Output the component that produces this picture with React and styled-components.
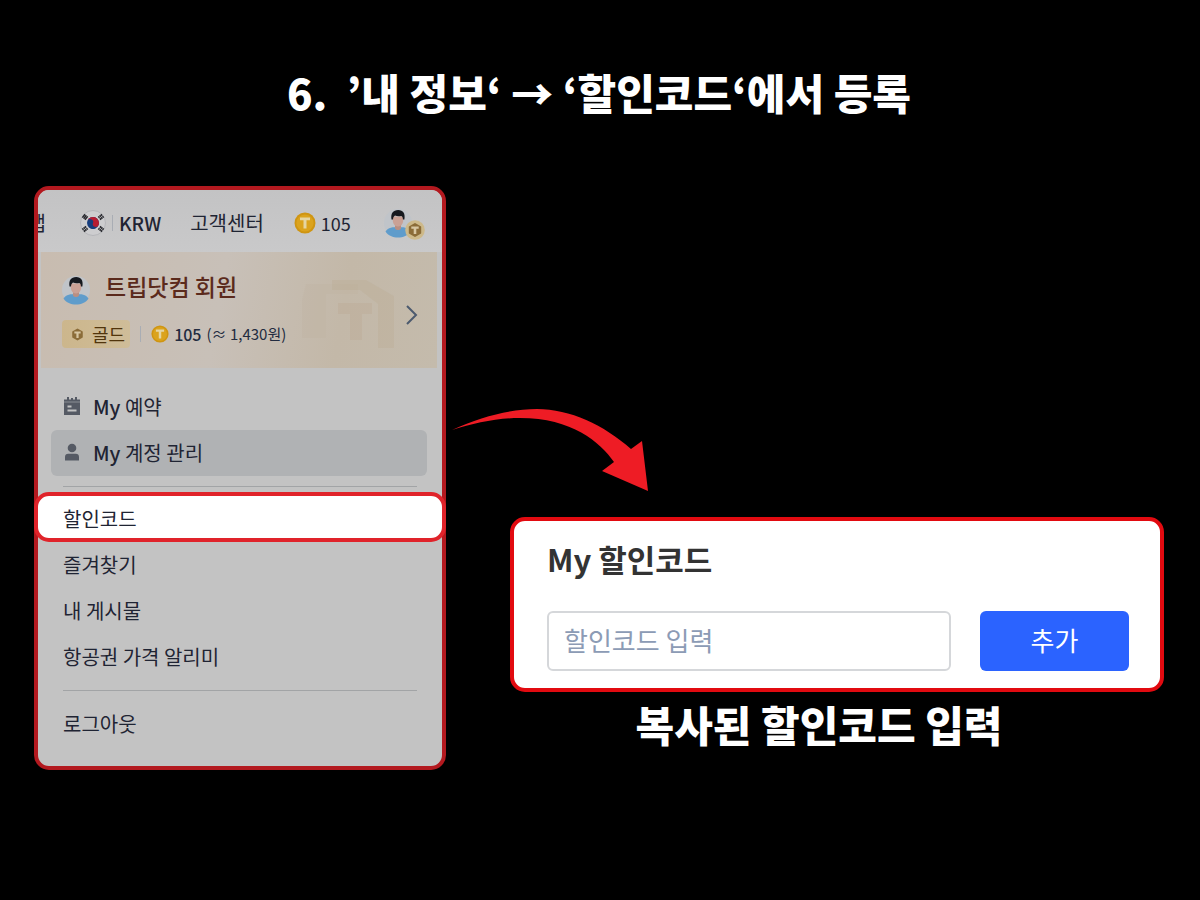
import React from "react";
import styled, { createGlobalStyle } from "styled-components";

const GlobalStyle = createGlobalStyle`
  *, *::before, *::after { box-sizing: border-box; }
  body {
    margin: 0;
    background: #000;
    color: #1f2433;
    font-family: "Noto Sans CJK KR", "Noto Sans", sans-serif;
  }
`;

const Page = styled.main`
  min-height: 100vh;
  padding: 68px 36px 40px 34px;
`;

const Title = styled.h1`
  margin: 0 0 70px;
  color: #fff;
  font-size: 42px;
  font-weight: 900;
  line-height: 48px;
  text-align: center;
  white-space: pre-wrap;
`;

const Steps = styled.div`
  display: flex;
  align-items: flex-start;
`;

const Panel = styled.section`
  flex: 0 0 auto;
  width: 412px;
  padding-bottom: 19px;
  border: 4px solid #b3191f;
  border-radius: 15px;
  background: #c3c3c3;
`;

const TopBar = styled.nav`
  display: flex;
  align-items: center;
  height: 62px;
  padding-top: 4px;
  overflow: hidden;
  border-radius: 11px 11px 0 0;
  background: linear-gradient(#c3c3c4, #c9c9ca);
  font-size: 20px;
  line-height: 28px;
  white-space: nowrap;
`;

const CutLink = styled.a`
  display: flex;
  flex: none;
  justify-content: flex-end;
  width: 8px;
  margin-right: 34px;
  overflow: hidden;
  color: inherit;
  text-decoration: none;
`;

const TopLink = styled.a`
  display: flex;
  align-items: center;
  gap: ${(p) => p.$gap || 0}px;
  margin-right: ${(p) => p.$after || 0}px;
  color: inherit;
  font-size: ${(p) => p.$size || 20}px;
  font-weight: ${(p) => p.$weight || 400};
  text-decoration: none;
`;

const Separator = styled.span`
  width: 1px;
  height: 16px;
  background: #a9adb4;
`;

const AvatarBadge = styled.span`
  position: relative;
  display: flex;

  & > svg:last-child {
    position: absolute;
    right: -13px;
    bottom: -2px;
  }
`;

const Member = styled.a`
  display: flex;
  align-items: center;
  justify-content: space-between;
  height: 116px;
  margin: 0 5px 0 3px;
  padding: 0 18px 0 21px;
  background: linear-gradient(100deg, #c8bcb0 0%, #c8c0b8 45%, #c3b8a8 75%, #c4bbac 100%);
  color: inherit;
  text-decoration: none;
`;

const MemberInfo = styled.div`
  display: flex;
  flex-direction: column;
  gap: 12px;
`;

const MemberSide = styled.div`
  display: flex;
  align-items: center;
  gap: 9px;
  margin-top: 10px;
`;

const MemberLine = styled.div`
  display: flex;
  align-items: center;
  gap: ${(p) => p.$gap}px;
  white-space: nowrap;
`;

const MemberName = styled.strong`
  padding-bottom: 8px;
  color: #5b2a1c;
  font-size: 23px;
  font-weight: 500;
  line-height: 28px;
`;

const Grade = styled.span`
  display: flex;
  align-items: center;
  gap: 6px;
  height: 28px;
  padding: 0 5px 0 7px;
  border-radius: 4px;
  background: linear-gradient(90deg, #ccb68c, #cfbd99);
  color: #51350c;
  font-size: 18px;
`;

const Points = styled.span`
  display: flex;
  align-items: center;
  gap: 5px;
  font-size: 15px;
  line-height: 24px;
  color: #232c40;

  b {
    font-size: 16px;
    font-weight: 500;
  }
`;

const Menu = styled.ul`
  margin: 0;
  padding: 16px 0 0;
  list-style: none;
`;

const Divider = styled.li`
  height: 1px;
  margin: 10px 25px ${(p) => p.$after}px;
  background: #a2a4a6;
`;

const MenuLink = styled.a`
  display: flex;
  align-items: center;
  gap: 12px;
  height: 46px;
  margin: 0 15px 0 13px;
  padding: 0 12px 2px;
  border-radius: 6px;
  background: ${(p) => (p.$active ? "#b0b2b4" : "transparent")};
  color: #1f2433;
  font-size: 20px;
  text-decoration: none;

  b { font-weight: 500; }
`;

const SpotlightLink = styled(MenuLink)`
  height: 50px;
  margin: 0 -4px;
  padding: 2px 25px 0;
  border: 4px solid #e0232a;
  border-radius: 15px;
  background: #fff;
`;

const Result = styled.div`
  display: flex;
  flex: 1;
  flex-direction: column;
  min-width: 0;
  padding-top: 222px;
`;

const CurvedArrow = styled.svg`
  display: block;
  margin: 0 0 25px 6px;
`;

const CodeCard = styled.form`
  margin-left: 64px;
  padding: 18px 31px 17px 33px;
  border: 4px solid #e20a10;
  border-radius: 15px;
  background: #fff;
`;

const CodeLabel = styled.label`
  display: block;
  margin-bottom: 32px;
  color: #333;
  font-size: 31px;
  font-weight: 700;
  line-height: 40px;
`;

const CodeRow = styled.div`
  display: flex;
  gap: 29px;
`;

const CodeInput = styled.input`
  flex: 1;
  min-width: 0;
  height: 60px;
  padding: 0 15px 4px;
  border: 2px solid #d5d7da;
  border-radius: 6px;
  background: #fff;
  font: inherit;
  font-size: 26px;

  &::placeholder { color: #8c9bb5; opacity: 1; }
`;

const AddButton = styled.button`
  width: 149px;
  height: 60px;
  padding: 0 0 4px;
  border: 0;
  border-radius: 6px;
  background: #2b63ff;
  color: #fff;
  font: inherit;
  font-size: 26px;
`;

const Caption = styled.p`
  margin: 8px 0 0 64px;
  padding-right: 36px;
  color: #fff;
  font-size: 42px;
  font-weight: 900;
  line-height: 48px;
  text-align: center;
`;

function Flag() {
  const bars = (x, y, angle, split) => (
    <g transform={`translate(${x} ${y}) rotate(${angle})`} stroke="#25262b" strokeWidth="1.400">
      <path d="M-2.200 -1.700H2.200M-2.200 0H2.200M-2.200 1.700H2.200" strokeDasharray={split ? "1.900 .6" : undefined} />
    </g>
  );
  return (
    <svg width="26" height="26" viewBox="0 0 26 26" aria-hidden="true">
      <circle cx="13" cy="13" r="12.5" fill="#cdcdcf" stroke="#b5b6ba" />
      <g transform="rotate(20 13 13)">
        <circle cx="13" cy="13" r="6" fill="#163d7d" />
        <path d="M7 13a6 6 0 0 1 12 0a3 3 0 0 1-6 0a3 3 0 0 0-6 0" fill="#b61c32" />
      </g>
      {bars(5, 7, -52, false)}
      {bars(21, 7, 52, true)}
      {bars(5, 19, 52, true)}
      {bars(21, 19, -52, true)}
    </svg>
  );
}

function Coin({ size }) {
  return (
    <svg width={size} height={size} viewBox="0 0 22 22" aria-hidden="true">
      <circle cx="11" cy="11" r="10.5" fill="#cf9512" />
      <circle cx="11" cy="11" r="8.6" fill="#dba31d" />
      <path d="M6 5.500h10v2.800h-3.500V16.500h-3V8.300H6z" fill="#e5d5a2" />
    </svg>
  );
}

function Medal({ size, ring }) {
  return (
    <svg width={size} height={size} viewBox="0 0 20 20" aria-hidden="true">
      {ring && <circle cx="10" cy="10" r="9.8" fill="#cdb98a" />}
      <path d="M10 4l5.200 3v6L10 16l-5.200-3V7z" fill="#8b6c38" stroke="#8b6c38" strokeWidth="2" strokeLinejoin="round" />
      <path d="M6.300 6.500h7.400v2.300h-2.400v5.200H8.700V8.800H6.300z" fill="#d7c6a2" />
    </svg>
  );
}

function Avatar() {
  return (
    <svg width="28" height="30" viewBox="0 0 28 30" aria-hidden="true">
      <circle cx="14" cy="15" r="14" fill="#c0c4c9" />
      <path d="M1.500 23.500C4 19.500 9 19 14 19s10 .5 12.500 4.500C24 27.500 19 29.500 14 29.500S4 27.500 1.500 23.500z" fill="#5f9ccb" />
      <path d="M11 15h6v5.500c-1.500 2-4.500 2-6 0z" fill="#b98f83" />
      <path d="M8.800 8.500h10.400v3.800c0 3.500-2.200 6.200-5.200 6.200s-5.200-2.700-5.200-6.200z" fill="#caa195" />
      <path d="M7.500 11.500C6.500 5.500 9 2 14.200 2c5 0 7.200 3.500 6.200 9.500h-1.500c0-2-.6-3.200-1.600-3.500-2.200.6-4.600.4-6.300-.4-1.200.7-1.900 2-2 3.900z" fill="#16191f" />
    </svg>
  );
}

function Watermark() {
  return (
    <svg width="94" height="78" viewBox="0 0 94 78" aria-hidden="true">
      <path d="M4 8h52v10H24v44H0V24z" fill="#bfb19b" opacity=".2" />
      <path d="M30 4h34l28 16v52H76V28L58 14H30z" fill="#b8a68d" opacity=".25" />
      <path d="M36 27h34v11H60v26H48V38H36z" fill="#b8a68d" opacity=".3" />
    </svg>
  );
}

function CalendarIcon() {
  return (
    <svg width="18" height="20" viewBox="0 0 18 20" aria-hidden="true">
      <path d="M1 3.500h16v15.500H1z" fill="#555a64" />
      <path d="M5 1v3M9 2v2M13 1v3" stroke="#555a64" strokeWidth="2" />
      <path d="M1 6h16" stroke="#8b8e94" strokeWidth="1" />
      <path d="M4.500 10.500H8.500M4.500 14.500h9" stroke="#c3c3c3" strokeWidth="1.800" />
    </svg>
  );
}

function UserIcon() {
  return (
    <svg width="18" height="20" viewBox="0 0 18 20" aria-hidden="true">
      <circle cx="9" cy="6" r="4.300" fill="#555a64" />
      <path d="M2 18.500V15c0-2 1.300-3.200 3.200-3.200h7.600c1.900 0 3.200 1.200 3.200 3.200v3.500z" fill="#555a64" />
    </svg>
  );
}

export default function App() {
  return (
    <>
      <GlobalStyle />
      <Page>
        <Title>{"6.  ’내 정보‘ → ‘할인코드‘에서 등록"}</Title>
        <Steps>
          <Panel>
            <TopBar>
              <CutLink href="#app">앱</CutLink>
              <TopLink href="#currency" $gap={6} $after={29} $size={19} $weight={500}>
                <Flag />
                <Separator />
                KRW
              </TopLink>
              <TopLink href="#support" $after={30}>고객센터</TopLink>
              <TopLink href="#coins" $gap={5} $after={33} $size={18}>
                <Coin size={22} />
                105
              </TopLink>
              <TopLink href="#me" aria-label="내 정보">
                <AvatarBadge>
                  <Avatar />
                  <Medal size={20} ring />
                </AvatarBadge>
              </TopLink>
            </TopBar>

            <Member href="#member">
              <MemberInfo>
                <MemberLine $gap={15}>
                  <Avatar />
                  <MemberName>트립닷컴 회원</MemberName>
                </MemberLine>
                <MemberLine $gap={10}>
                  <Grade>
                    <Medal size={17} />
                    골드
                  </Grade>
                  <Separator />
                  <Points>
                    <Coin size={18} />
                    <b>105</b>
                    <span>(≈ 1,430원)</span>
                  </Points>
                </MemberLine>
              </MemberInfo>
              <MemberSide>
                <Watermark />
                <svg width="14" height="22" viewBox="0 0 14 22" aria-hidden="true">
                  <path d="M2 2l9 9-9 9" fill="none" stroke="#4c5a6e" strokeWidth="2" />
                </svg>
              </MemberSide>
            </Member>

            <Menu>
              <li>
                <MenuLink href="#bookings">
                  <CalendarIcon />
                  <span><b>My</b> 예약</span>
                </MenuLink>
              </li>
              <li>
                <MenuLink href="#account" $active>
                  <UserIcon />
                  <span><b>My</b> 계정 관리</span>
                </MenuLink>
              </li>
              <Divider $after={5} />
              <li><SpotlightLink href="#codes">할인코드</SpotlightLink></li>
              <li><MenuLink href="#favorites">즐겨찾기</MenuLink></li>
              <li><MenuLink href="#posts">내 게시물</MenuLink></li>
              <li><MenuLink href="#alerts">항공권 가격 알리미</MenuLink></li>
              <Divider $after={10} />
              <li><MenuLink href="#logout">로그아웃</MenuLink></li>
            </Menu>
          </Panel>

          <Result>
            <CurvedArrow width="197" height="84" viewBox="0 0 197 84" aria-hidden="true">
              <path
                d="M0 22C30 8 60 1 85 1C118 1 152 17 179 41L190 33L196 83L150 63L162 54C148 34 120 10 68 10C45 10 22 15 0 22Z"
                fill="#ee1c25"
              />
            </CurvedArrow>
            <CodeCard onSubmit={(e) => e.preventDefault()}>
              <CodeLabel htmlFor="code">My 할인코드</CodeLabel>
              <CodeRow>
                <CodeInput id="code" placeholder="할인코드 입력" />
                <AddButton type="submit">추가</AddButton>
              </CodeRow>
            </CodeCard>
            <Caption>복사된 할인코드 입력</Caption>
          </Result>
        </Steps>
      </Page>
    </>
  );
}
